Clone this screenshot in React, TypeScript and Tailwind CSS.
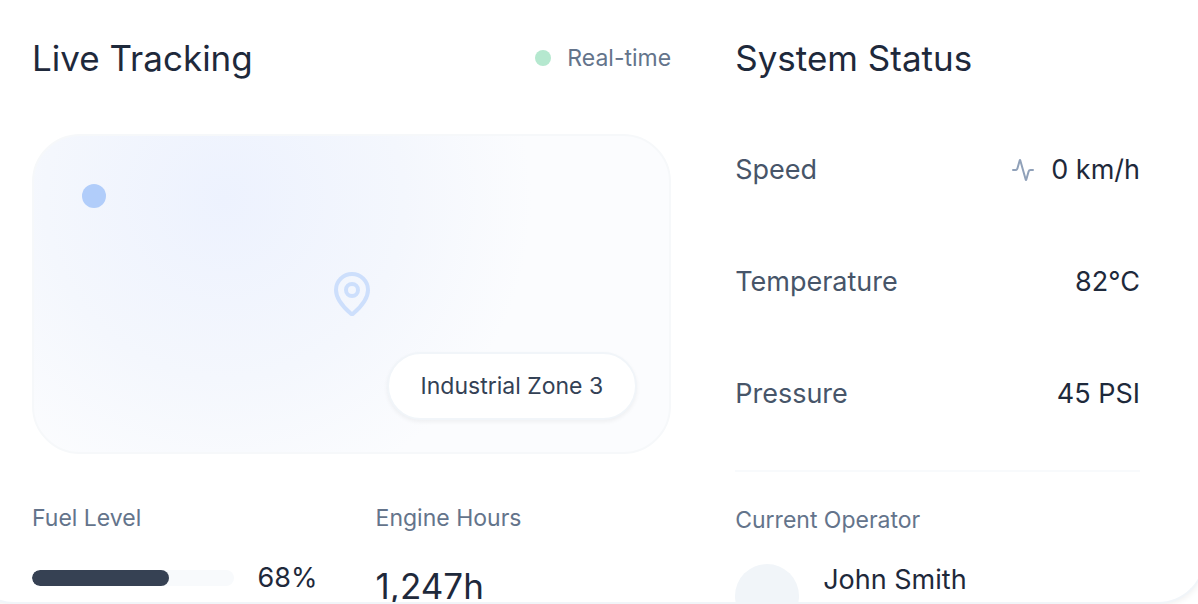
import { Activity, MapPin } from "lucide-react";

const readings = [
  { label: "Speed", value: "0 km/h", live: true },
  { label: "Temperature", value: "82°C", live: false },
  { label: "Pressure", value: "45 PSI", live: false },
];

const fuelLevel = 68;

function LiveTracking() {
  return (
    <section className="col-span-3">
      <header className="mb-12 flex items-center justify-between">
        <h2 className="text-[35px] leading-[56px] text-[#1e293b]">Live Tracking</h2>
        <div className="flex items-center gap-4">
          <span className="size-4 rounded-full bg-[#b5e8cf]" />
          <span className="text-[23px] leading-8 text-[#64748b]">Real-time</span>
        </div>
      </header>

      <div className="relative flex h-80 items-center justify-center rounded-[48px] border-2 border-[#f6f8fa] bg-[#fbfcfe] bg-[radial-gradient(circle_at_30%_20%,#edf2fe,#f4f7fd_35%,#fbfcfe_60%)]">
        <span className="absolute top-12 left-12 size-6 rounded-full bg-[#b1cdfa]" />
        <MapPin className="size-12 text-[#cddffc]" strokeWidth={2} />
        <span className="absolute right-8 bottom-8 rounded-full border-2 border-[#f1f5f9] bg-white px-8 py-4 text-[23px] leading-8 text-[#334155] shadow-[0_2px_4px_rgba(0,0,0,0.05)]">
          Industrial Zone 3
        </span>
      </div>

      <div className="mt-12 grid grid-cols-2 gap-12">
        <div>
          <h3 className="mb-6 text-[23px] leading-8 text-[#64748b]">Fuel Level</h3>
          <div className="flex h-10 items-center gap-6">
            <div className="h-4 flex-1 overflow-hidden rounded-full bg-slate-50">
              <div className="h-full rounded-full bg-[#364153]" style={{ width: `${fuelLevel}%` }} />
            </div>
            <span className="w-[70px] text-[27px] leading-10 text-[#1e293b]">{fuelLevel}%</span>
          </div>
        </div>
        <div>
          <h3 className="mb-6 text-[23px] leading-8 text-[#64748b]">Engine Hours</h3>
          <p className="text-[35px] leading-[56px] text-[#1e293b]">1,247h</p>
        </div>
      </div>
    </section>
  );
}

function SystemStatus() {
  return (
    <section className="col-span-2">
      <h2 className="mb-12 text-[35px] leading-[56px] text-[#1e293b]">System Status</h2>
      <dl className="flex flex-col gap-10">
        {readings.map((r) => (
          <div key={r.label} className="flex items-center justify-between py-4 text-[27px] leading-10">
            <dt className="text-[#475569]">{r.label}</dt>
            <dd className="flex items-center gap-4 text-[#1e293b]">
              {r.live && <Activity className="size-6 text-slate-400" strokeWidth={2} />}
              {r.value}
            </dd>
          </div>
        ))}
      </dl>
      <div className="mt-10 border-t-2 border-[#f8fafc] pt-8">
        <h3 className="mb-6 text-[23px] leading-8 text-[#64748b]">Current Operator</h3>
        <div className="flex h-18 items-center gap-6">
          <span className="size-16 rounded-full bg-slate-100" />
          <p className="self-start text-[27px] leading-10 text-[#1e293b]">John Smith</p>
        </div>
      </div>
    </section>
  );
}

export default function App() {
  return (
    <div className="h-screen overflow-hidden bg-white font-['Inter',sans-serif] font-normal">
      <main className="-mr-2 -ml-[34px] h-full overflow-hidden rounded-b-[48px] border-x-2 border-b-2 border-slate-100 bg-white px-16 pt-[30px] shadow-[0_2px_6px_rgba(0,0,0,0.06)]">
        <div className="grid grid-cols-5 gap-16">
          <LiveTracking />
          <SystemStatus />
        </div>
      </main>
    </div>
  );
}
